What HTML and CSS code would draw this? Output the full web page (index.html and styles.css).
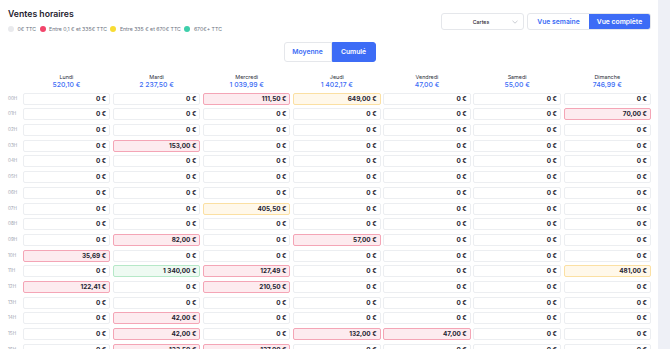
FILE: index.html
```html
<!DOCTYPE html>
<html lang="fr">
<head>
    <meta charset="UTF-8">
    <meta name="viewport" content="width=device-width, initial-scale=1.0">
    <title>Ventes horaires</title>
    <link rel="stylesheet" href="styles.css">
</head>
<body>

    <!-- Carte ventes horaires -->
    <section class="panel">
        <div class="head">
            <div>
                <h1 class="title">Ventes horaires</h1>
                <div class="legend">
                    <span class="dot dot-none"></span><span class="legend-text">0€ TTC</span>
                    <span class="dot dot-low"></span><span class="legend-text">Entre 0,1 € et 335€ TTC</span>
                    <span class="dot dot-mid"></span><span class="legend-text">Entre 335 € et 670€ TTC</span>
                    <span class="dot dot-high"></span><span class="legend-text">670€+ TTC</span>
                </div>
            </div>
            <div class="controls">
                <div class="select">
                    <span class="select-label">Cartes</span>
                    <svg class="chevron" width="6" height="4" viewBox="0 0 6 4"><path d="M0.5 0.8 L3 3.2 L5.5 0.8" fill="none" stroke="#b4b8c0" stroke-width="0.7"/></svg>
                </div>
                <div class="seg">
                    <span class="seg-btn">Vue semaine</span>
                    <span class="seg-btn active">Vue complète</span>
                </div>
            </div>
        </div>

        <div class="mode">
            <span class="mode-btn">Moyenne</span>
            <span class="mode-btn active">Cumulé</span>
        </div>

        <!-- Tableau des heures -->
        <div class="grid">
            <div></div>
            <div class="day"><div class="day-name">Lundi</div><div class="day-total">520,10 €</div></div>
            <div class="day"><div class="day-name">Mardi</div><div class="day-total">2 237,50 €</div></div>
            <div class="day"><div class="day-name">Mercredi</div><div class="day-total">1 039,99 €</div></div>
            <div class="day"><div class="day-name">Jeudi</div><div class="day-total">1 402,17 €</div></div>
            <div class="day"><div class="day-name">Vendredi</div><div class="day-total">47,00 €</div></div>
            <div class="day"><div class="day-name">Samedi</div><div class="day-total">55,00 €</div></div>
            <div class="day"><div class="day-name">Dimanche</div><div class="day-total">746,99 €</div></div>

            <div class="hour">00H</div>
            <div class="cell">0 €</div><div class="cell">0 €</div><div class="cell low">111,50 €</div><div class="cell mid">649,00 €</div><div class="cell">0 €</div><div class="cell">0 €</div><div class="cell">0 €</div>

            <div class="hour">01H</div>
            <div class="cell">0 €</div><div class="cell">0 €</div><div class="cell">0 €</div><div class="cell">0 €</div><div class="cell">0 €</div><div class="cell">0 €</div><div class="cell low">70,00 €</div>

            <div class="hour">02H</div>
            <div class="cell">0 €</div><div class="cell">0 €</div><div class="cell">0 €</div><div class="cell">0 €</div><div class="cell">0 €</div><div class="cell">0 €</div><div class="cell">0 €</div>

            <div class="hour">03H</div>
            <div class="cell">0 €</div><div class="cell low">153,00 €</div><div class="cell">0 €</div><div class="cell">0 €</div><div class="cell">0 €</div><div class="cell">0 €</div><div class="cell">0 €</div>

            <div class="hour">04H</div>
            <div class="cell">0 €</div><div class="cell">0 €</div><div class="cell">0 €</div><div class="cell">0 €</div><div class="cell">0 €</div><div class="cell">0 €</div><div class="cell">0 €</div>

            <div class="hour">05H</div>
            <div class="cell">0 €</div><div class="cell">0 €</div><div class="cell">0 €</div><div class="cell">0 €</div><div class="cell">0 €</div><div class="cell">0 €</div><div class="cell">0 €</div>

            <div class="hour">06H</div>
            <div class="cell">0 €</div><div class="cell">0 €</div><div class="cell">0 €</div><div class="cell">0 €</div><div class="cell">0 €</div><div class="cell">0 €</div><div class="cell">0 €</div>

            <div class="hour">07H</div>
            <div class="cell">0 €</div><div class="cell">0 €</div><div class="cell mid">405,50 €</div><div class="cell">0 €</div><div class="cell">0 €</div><div class="cell">0 €</div><div class="cell">0 €</div>

            <div class="hour">08H</div>
            <div class="cell">0 €</div><div class="cell">0 €</div><div class="cell">0 €</div><div class="cell">0 €</div><div class="cell">0 €</div><div class="cell">0 €</div><div class="cell">0 €</div>

            <div class="hour">09H</div>
            <div class="cell">0 €</div><div class="cell low">82,00 €</div><div class="cell">0 €</div><div class="cell low">57,00 €</div><div class="cell">0 €</div><div class="cell">0 €</div><div class="cell">0 €</div>

            <div class="hour">10H</div>
            <div class="cell low">35,69 €</div><div class="cell">0 €</div><div class="cell">0 €</div><div class="cell">0 €</div><div class="cell">0 €</div><div class="cell">0 €</div><div class="cell">0 €</div>

            <div class="hour">11H</div>
            <div class="cell">0 €</div><div class="cell high">1 340,00 €</div><div class="cell low">127,49 €</div><div class="cell">0 €</div><div class="cell">0 €</div><div class="cell">0 €</div><div class="cell mid">481,00 €</div>

            <div class="hour">12H</div>
            <div class="cell low">122,41 €</div><div class="cell">0 €</div><div class="cell low">210,50 €</div><div class="cell">0 €</div><div class="cell">0 €</div><div class="cell">0 €</div><div class="cell">0 €</div>

            <div class="hour">13H</div>
            <div class="cell">0 €</div><div class="cell">0 €</div><div class="cell">0 €</div><div class="cell">0 €</div><div class="cell">0 €</div><div class="cell">0 €</div><div class="cell">0 €</div>

            <div class="hour">14H</div>
            <div class="cell">0 €</div><div class="cell low">42,00 €</div><div class="cell">0 €</div><div class="cell">0 €</div><div class="cell">0 €</div><div class="cell">0 €</div><div class="cell">0 €</div>

            <div class="hour">15H</div>
            <div class="cell">0 €</div><div class="cell low">42,00 €</div><div class="cell">0 €</div><div class="cell low">132,00 €</div><div class="cell low">47,00 €</div><div class="cell">0 €</div><div class="cell">0 €</div>

            <div class="hour">16H</div>
            <div class="cell">0 €</div><div class="cell low">133,50 €</div><div class="cell low">137,00 €</div><div class="cell">0 €</div><div class="cell">0 €</div><div class="cell">0 €</div><div class="cell">0 €</div>
        </div>
    </section>

</body>
</html>
```

FILE: styles.css
```css
/* Page */
body {
    margin: 0;
    background-color: #eef0f6;
    font-family: Inter, "Noto Sans", sans-serif;
    color: #1f2330;
}

.panel {
    box-sizing: border-box;
    width: 658px;
    min-height: 400px;
    background-color: #fff;
    padding: 7px 7px 0 8px;
}

/* En-tête */
.head {
    display: flex;
    justify-content: space-between;
    align-items: flex-start;
}

.title {
    margin: 0;
    font-size: 8.7px;
    line-height: 14px;
    font-weight: 600;
}

.legend {
    display: flex;
    align-items: center;
    height: 8px;
    margin-top: 4px;
    font-size: 5.2px;
    color: #6b7280;
}

.dot {
    width: 6px;
    height: 6px;
    border-radius: 50%;
    margin-right: 3.5px;
}

.legend-text {
    margin-right: 3.5px;
}

.dot-none { background-color: #e9eaed; }
.dot-low { background-color: #f2456b; }
.dot-mid { background-color: #f8dc33; }
.dot-high { background-color: #3ecfab; }

.controls {
    display: flex;
    gap: 3px;
    margin-top: 6px;
}

.select {
    box-sizing: border-box;
    display: flex;
    align-items: center;
    width: 83px;
    height: 17px;
    padding: 0 5px 0 8px;
    border: 1px solid #e5e7eb;
    border-radius: 3px;
    font-size: 5.2px;
    font-weight: 500;
}

.select-label {
    flex: 1;
    text-align: center;
}

.seg {
    display: flex;
    border: 1px solid #e5e7eb;
    border-radius: 3px;
    overflow: hidden;
}

.seg-btn {
    width: 61px;
    height: 15px;
    line-height: 15px;
    text-align: center;
    font-size: 6.8px;
    font-weight: 600;
    color: #3b6cf5;
}

.seg-btn.active,
.mode-btn.active {
    background-color: #3d6cf6;
    color: #fff;
}

/* Moyenne / Cumulé */
.mode {
    display: flex;
    justify-content: center;
    margin-top: 9px;
}

.mode-btn {
    width: 46px;
    height: 18px;
    line-height: 18px;
    text-align: center;
    font-size: 6.8px;
    font-weight: 600;
    color: #3b6cf5;
    border: 1px solid #e5e7eb;
    border-radius: 3px 0 0 3px;
}

.mode-btn.active {
    width: 42px;
    border-color: #3d6cf6;
    border-radius: 0 3px 3px 0;
}

/* Grille des heures */
.grid {
    display: grid;
    grid-template-columns: 12px repeat(7, 1fr);
    column-gap: 2.7px;
    row-gap: 3.7px;
    margin-top: 11px;
}

.day {
    text-align: center;
}

.day-name {
    font-size: 5.4px;
    line-height: 8px;
    color: #2a2e38;
}

.day-total {
    font-size: 6.8px;
    line-height: 8px;
    font-weight: 500;
    color: #3b6cf5;
}

.hour {
    font-size: 4.6px;
    line-height: 12px;
    color: #9ca3af;
    white-space: nowrap;
}

.cell {
    box-sizing: border-box;
    height: 12px;
    padding-right: 3px;
    border: 1px solid #eceef1;
    border-radius: 2px;
    text-align: right;
    font-size: 6.4px;
    line-height: 10px;
    font-weight: 700;
    white-space: nowrap;
}

.cell.low {
    background-color: #fdebef;
    border-color: #f4a5b6;
}

.cell.mid {
    background-color: #fff8ea;
    border-color: #fbe0a3;
}

.cell.high {
    background-color: #eefaf2;
    border-color: #b6e8c8;
}
```
